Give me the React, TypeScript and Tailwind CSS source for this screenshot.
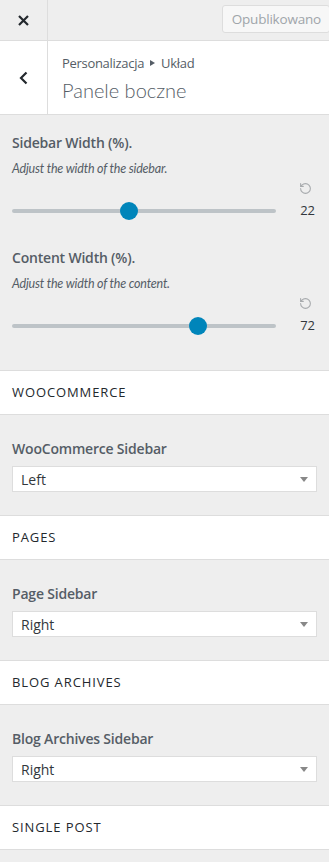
import { RotateCcw } from 'lucide-react';

function RangeControl({ title, desc, value }: { title: string; desc: string; value: number }) {
  return (
    <div className="px-3">
      <div className="h-5 text-[14px] font-semibold leading-5 tracking-[-0.2px] text-[#555d66]">{title}</div>
      <div className="mt-[7px] h-[18px] font-['Lato',sans-serif] text-[12.5px] italic leading-[18px] tracking-[-0.2px] text-[#555d66]">{desc}</div>
      <div className="mt-1 flex h-3 justify-end pr-[5px]">
        <RotateCcw size={13} strokeWidth={2} className="text-[#a7aaad]" />
      </div>
      <div className="mt-2 flex h-[18px] items-center">
        <div className="relative h-1 w-[264px] rounded-full bg-[#bdc3c7]">
          <div
            className="absolute top-1/2 h-[18px] w-[18px] -translate-x-1/2 -translate-y-1/2 rounded-full bg-[#0085ba]"
            style={{ left: `${value === 22 ? 44.3 : 70.5}%` }}
          />
        </div>
        <div className="ml-auto pr-[2px] text-[13px] text-[#32373c]">{value}</div>
      </div>
    </div>
  );
}

function Section({ title }: { title: string }) {
  return (
    <div className="flex h-[45px] items-center border-y border-[#ddd] bg-white px-3 text-[13px] uppercase tracking-[0.9px] text-[#23282d]">
      {title}
    </div>
  );
}

function SelectControl({ label, value }: { label: string; value: string }) {
  return (
    <div className="px-3 pb-[23px] pt-6">
      <div className="h-5 text-[14px] font-semibold leading-5 tracking-[-0.2px] text-[#555d66]">{label}</div>
      <div className="mt-[7px] flex h-[26px] items-center border border-[#ddd] bg-white pl-2 pr-[8px] text-[14px] text-[#32373c]">
        <span>{value}</span>
        <span className="ml-auto h-0 w-0 border-x-[4px] border-t-[5px] border-x-transparent border-t-[#888]" />
      </div>
    </div>
  );
}

export default function App() {
  return (
    <div className="min-h-[862px] w-[329px] overflow-hidden bg-[#eee] font-['Open_Sans',sans-serif]">
      {/* top bar */}
      <div className="flex h-[41px] border-b border-[#ddd] bg-[#eee]">
        <div className="flex w-[48px] items-center justify-center border-r border-[#ddd]">
          <svg width="11" height="11" viewBox="0 0 11 11" className="text-[#23282d]">
            <path d="M1 1l9 9M10 1l-9 9" stroke="currentColor" strokeWidth="2.2" />
          </svg>
        </div>
        <div className="flex flex-1 justify-end pt-[5px]">
          <button className="-mr-px h-[28px] rounded-[3px] border border-[#ddd] bg-[#f7f7f7] pl-[9px] pr-[8px] text-[13.5px] tracking-[-0.2px] text-[#a0a5aa]">
            Opublikowano
          </button>
        </div>
      </div>

      {/* header */}
      <div className="flex h-[74px] border-b border-[#ddd] bg-white">
        <div className="flex w-[48px] items-center justify-center border-r border-[#ddd]">
          <svg width="9" height="14" viewBox="0 0 9 14" className="text-[#23282d]">
            <path d="M7.5 1.5L2 7l5.5 5.5" fill="none" stroke="currentColor" strokeWidth="2.2" />
          </svg>
        </div>
        <div className="flex flex-col pl-[14px] pt-[12px]">
          <div className="flex items-center text-[13px] leading-5 tracking-[-0.3px] text-[#555d66]">
            Personalizacja
            <span className="mx-[6px] h-0 w-0 border-y-[3.5px] border-l-[5px] border-y-transparent border-l-[#555d66]" />
            Układ
          </div>
          <div className="mt-[3px] font-['Lato',sans-serif] text-[20px] font-light leading-7 text-[#555d66]">Panele boczne</div>
        </div>
      </div>

      {/* ranges */}
      <div className="pt-[18px]">
        <RangeControl title="Sidebar Width (%)." desc="Adjust the width of the sidebar." value={22} />
        <div className="mt-7">
          <RangeControl title="Content Width (%)." desc="Adjust the width of the content." value={72} />
        </div>
      </div>

      <div className="mt-[35px]">
        <Section title="WooCommerce" />
        <SelectControl label="WooCommerce Sidebar" value="Left" />
        <Section title="Pages" />
        <SelectControl label="Page Sidebar" value="Right" />
        <Section title="Blog Archives" />
        <SelectControl label="Blog Archives Sidebar" value="Right" />
        <Section title="Single Post" />
      </div>
    </div>
  );
}
